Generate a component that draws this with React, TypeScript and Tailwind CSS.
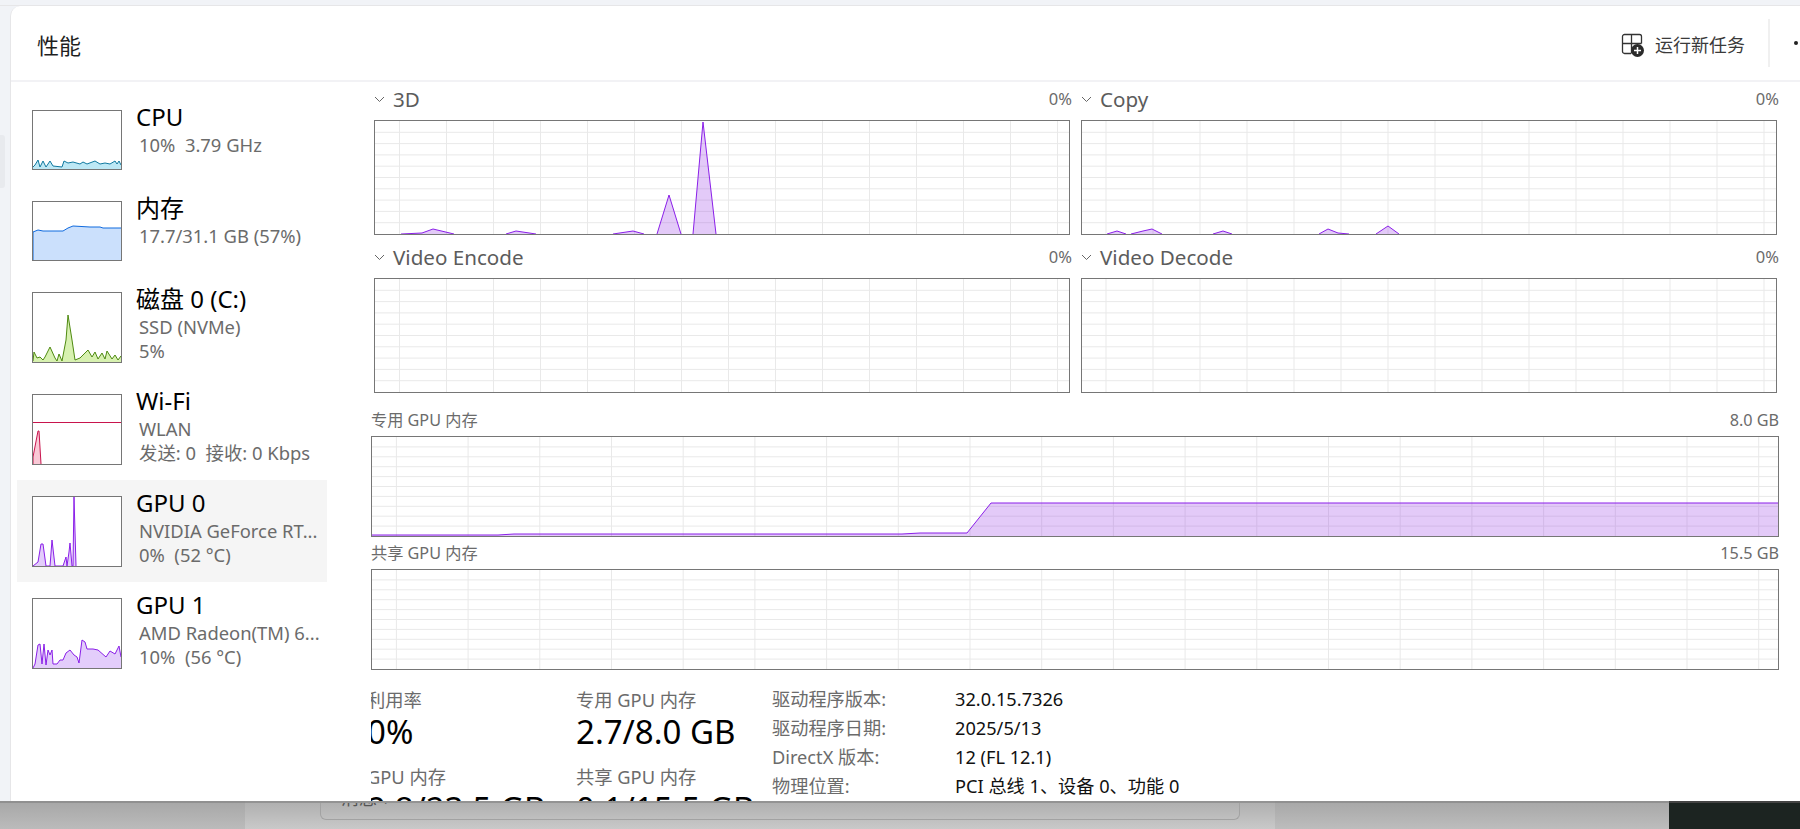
const font = "font-['Noto_Sans','Noto_Sans_CJK_SC',sans-serif]"

function Thumb({ h, fill, stroke, points, extra }: any) {
  const poly = `0,${h} ${points} 88,${h}`
  return (
    <div className="w-[90px] shrink-0 border border-[#767676] bg-white" style={{ height: h + 2 }}>
      <svg width="88" height={h} className="block">
        <polygon points={poly} fill={fill} />
        <polyline points={points} fill="none" stroke={stroke} strokeWidth="1" />
        {extra}
      </svg>
    </div>
  )
}

function SideItem({ title, lines, active, className, thumb }: any) {
  return (
    <div className={`ml-[6px] flex gap-[14px] pl-[15px] ${active ? 'w-[310px] bg-[#f5f5f5]' : ''} ${className}`}>
      {thumb}
      <div className="min-w-0 -mt-[9px]">
        <div className="text-[24px] leading-[32px] whitespace-nowrap text-black">{title}</div>
        {lines.map((l: string) => (
          <div key={l} className="pl-[3px] text-[18.4px] leading-[24px] whitespace-pre text-[#6b6b6b]">{l}</div>
        ))}
      </div>
    </div>
  )
}

function Chart({ w, h, step, offset, points }: any) {
  const vs: number[] = []
  for (let x = offset; x < w; x += step) vs.push(x)
  const hs = Array.from({ length: 9 }, (_, i) => ((i + 1) * h) / 10)
  return (
    <div className="border border-[#767676] bg-white" style={{ width: w + 2, height: h + 2 }}>
      <svg width={w} height={h} className="block">
        {vs.map((x) => <line key={x} x1={x} x2={x} y1="0" y2={h} stroke="#e9e9e9" strokeWidth="1" />)}
        {hs.map((y) => <line key={y} x1="0" x2={w} y1={y} y2={y} stroke="#e9e9e9" strokeWidth="1" />)}
        {points.map((p: string) => (
          <g key={p}>
            <polygon points={`${p} ${w},${h} 0,${h}`} fill="#8e2de2" fillOpacity="0.25" />
            <polyline points={p} fill="none" stroke="#8a1fe8" strokeWidth="1" />
          </g>
        ))}
      </svg>
    </div>
  )
}

function GraphBlock({ title, points = [], offset }: any) {
  return (
    <div className="w-[696px]">
      <div className="flex h-[21px] items-center justify-between">
        <div className="flex items-center gap-[8px]">
          <svg width="11" height="7" viewBox="0 0 11 7"><path d="M1 1l4.5 4.5L10 1" fill="none" stroke="#666" strokeWidth="1" /></svg>
          <span className="text-[20.6px] leading-[21px] text-[#5c5c5c]">{title}</span>
        </div>
        <span className="-mr-[2px] text-[16.5px] text-[#6b6b6b]">0%</span>
      </div>
      <div className="mt-[10px]">
        <Chart w={694} h={113} step={47} offset={offset} points={points} />
      </div>
    </div>
  )
}

function Stat({ label, value, className }: any) {
  return (
    <div className={className}>
      <div className="text-[18.3px] leading-[24px] whitespace-nowrap text-[#6b6b6b]">{label}</div>
      <div className="text-[33px] leading-[40px] whitespace-nowrap text-black">{value}</div>
    </div>
  )
}

const info = [
  ['驱动程序版本:', '32.0.15.7326'],
  ['驱动程序日期:', '2025/5/13'],
  ['DirectX 版本:', '12 (FL 12.1)'],
  ['物理位置:', 'PCI 总线 1、设备 0、功能 0'],
]

export default function App() {
  return (
    <div className={`flex h-[829px] w-[1800px] flex-col overflow-hidden bg-[#f1f3f7] ${font}`}>
      <div className="h-[6px] shrink-0 border-b border-[#e6e6e8]" />
      <div className="flex min-h-0 flex-1">
        <div className="w-[10px] shrink-0 pt-[129px]">
          <div className="h-[53px] w-[5px] rounded-r-[3px] bg-[#e8eaee]" />
        </div>
        <div className="min-w-0 flex-1 overflow-hidden rounded-tl-[10px] border-l border-[#e6e6e8] bg-white">
          <div className="flex h-[76px] items-center border-b-[2px] border-[#f2f2f5]">
            <span className="ml-[26px] pt-[5px] text-[22px] text-[#1f1f1f]">性能</span>
            <div className="ml-auto flex items-center">
              <svg width="24" height="24" viewBox="0 0 24 24" className="mt-[3px] mr-[10px]">
                <path d="M10 20.5H3.5a2 2 0 0 1-2-2v-15a2 2 0 0 1 2-2h15a2 2 0 0 1 2 2v7M1.5 10.5h19M10.5 1.5v19" fill="none" stroke="#333" strokeWidth="1.3" />
                <circle cx="16.5" cy="17.5" r="6.5" fill="#2b2b2b" />
                <path d="M16.5 14v7M13 17.5h7" stroke="#fff" strokeWidth="1.5" />
              </svg>
              <span className="pt-[4px] text-[18px] text-[#3a3a3a]">运行新任务</span>
              <div className="ml-[23px] h-[48px] w-[2px] bg-[#f0f0f0]" />
              <span className="ml-[24px] h-[4px] w-[4px] rounded-full bg-[#222]" />
              <span className="w-[2px]" />
            </div>
          </div>
          <div className="flex">
            <div className="w-[360px] shrink-0 pt-[28px]">
              <SideItem
                title="CPU"
                lines={['10%  3.79 GHz']}
                className="h-[91px]"
                thumb={<Thumb h={58} fill="#bde8f5" stroke="#11799f" points="0,56 2,54 5,49 7,56 10,50 13,56 17,50 20,55 29,56 31,50 35,52 40,51 47,53 50,51 54,53 62,50 67,53 72,52 77,53 82,50 84,53 86,50 88,54" />}
              />
              <SideItem
                title="内存"
                lines={['17.7/31.1 GB (57%)']}
                className="h-[91px]"
                thumb={<Thumb h={58} fill="#cbe0fc" stroke="#0f6ade" points="0,58 0,30 5,28 10,29 30,29 35,26 40,24 57,25 60,25 67,25 70,26 88,26" />}
              />
              <SideItem
                title="磁盘 0 (C:)"
                lines={['SSD (NVMe)', '5%']}
                className="h-[102px]"
                thumb={<Thumb h={69} fill="#d7f1b0" stroke="#4e8a10" points="0,68 1,59 4,65 7,64 10,67 12,64 17,54 22,65 24,68 26,61 29,68 33,47 35,22 39,47 42,67 47,65 50,62 55,57 59,64 62,59 65,66 69,60 72,66 74,58 79,66 82,62 85,67 88,63" />}
              />
              <SideItem
                title="Wi-Fi"
                lines={['WLAN', '发送: 0  接收: 0 Kbps']}
                className="h-[86px]"
                thumb={<Thumb h={69} fill="#f9c9d6" stroke="#c8144d" points="0,69 0,62 5,36 6,36 8,69" extra={<line x1="0" x2="88" y1="27.5" y2="27.5" stroke="#c8144d" strokeWidth="1" />} />}
              />
              <SideItem
                active
                title="GPU 0"
                lines={['NVIDIA GeForce RT...', '0%  (52 °C)']}
                className="h-[102px] pt-[16px]"
                thumb={<Thumb h={69} fill="#e3cdfb" stroke="#8a1fe8" points="0,69 5,65 8,47 10,47 13,69 17,69 19,43 22,69 30,69 33,60 34,69 36,55 37,46 39,69 40,69 41,0 43,69" />}
              />
              <SideItem
                title="GPU 1"
                lines={['AMD Radeon(TM) 6...', '10%  (56 °C)']}
                className="h-[90px] pt-[16px]"
                thumb={<Thumb h={69} fill="#e3cdfb" stroke="#8a1fe8" points="0,69 2,65 5,46 7,45 9,65 11,45 13,66 15,51 17,56 19,51 20,65 24,65 27,61 30,61 33,54 37,51 41,56 44,58 46,64 49,41 52,43 54,50 60,50 65,51 73,58 77,52 82,55 86,47 88,58" />}
              />
            </div>
            <div className="min-w-0 flex-1 overflow-hidden">
              <div className="ml-[3px] w-[1408px] pt-[7px]">
                <div className="grid w-[1403px] grid-cols-[696px_696px] gap-x-[11px] gap-y-[12px]">
                  <GraphBlock title="3D" offset={24.5} points={['26,113 47,112 58,108 79,113', '131,113 141,110 161,113', '238,113 258,110 269,113', '282,113 294,74 306,113', '318,113 328,1 341,113']} />
                  <GraphBlock title="Copy" offset={24} points={['25,113 35,110 44,113', '49,113 61,110 70,108 80,113', '131,113 141,110 150,113', '237,113 246,108 256,112 267,113', '294,113 306,105 317,113']} />
                  <GraphBlock title="Video Encode" offset={24.5} points={[]} />
                  <GraphBlock title="Video Decode" offset={24} points={[]} />
                </div>
                <div className="mt-[14px] w-[1408px] -ml-[3px]">
                  <div className="flex h-[29px] items-center justify-between pb-[2px] text-[16.2px] text-[#6b6b6b]"><span>专用 GPU 内存</span><span>8.0 GB</span></div>
                  <Chart w={1406} h={99} step={71.7} offset={24.4} points={['0,98 126,98 142,97 530,97 548,96 595,96 619,66 1406,66']} />
                  <div className="mt-[3px] flex h-[29px] items-center justify-between pb-[2px] text-[16.2px] text-[#6b6b6b]"><span>共享 GPU 内存</span><span>15.5 GB</span></div>
                  <Chart w={1406} h={99} step={71.7} offset={24.4} points={[]} />
                </div>
              </div>
              <div className="-ml-[4px] flex pt-[18px]">
                <div className="w-[209px]">
                  <Stat label="利用率" value="0%" />
                  <Stat label="GPU 内存" value="2.8/23.5 GB" className="mt-[13px]" />
                </div>
                <div className="w-[196px]">
                  <Stat label="专用 GPU 内存" value="2.7/8.0 GB" />
                  <Stat label="共享 GPU 内存" value="0.1/15.5 GB" className="mt-[13px]" />
                </div>
                <div className="-mt-[3px]">
                  {info.map(([k, v]) => (
                    <div key={k} className="flex h-[29px] items-center text-[18.2px] whitespace-nowrap">
                      <span className="w-[183px] text-[#6b6b6b]">{k}</span>
                      <span className="text-[#111]">{v}</span>
                    </div>
                  ))}
                </div>
              </div>
            </div>
          </div>
        </div>
      </div>
      <div className="flex h-[28px] shrink-0">
        <div className="w-[245px] border-t-[2px] border-[#909090] bg-gradient-to-b from-[#a8a8a8] to-[#bbbbbb]" />
        <div className="h-full w-[1030px] border-t-[2px] border-[#939393] bg-gradient-to-b from-[#b0b0b0] to-[#c9c9c9] pl-[75px]">
          <div className="h-[17px] w-[920px] overflow-hidden rounded-b-[6px] border-x border-b border-[#a2a2a2] pl-[20px]">
            <div className="-mt-[17px] text-[18px] leading-[24px] text-[#555]">消息 ‹</div>
          </div>
        </div>
        <div className="flex-1 border-t-[2px] border-[#909090] bg-gradient-to-b from-[#a8a8a8] to-[#bdbdbd]" />
        <div className="w-[131px] border-t-[2px] border-[#444] bg-[#1c2421]" />
      </div>
    </div>
  )
}
